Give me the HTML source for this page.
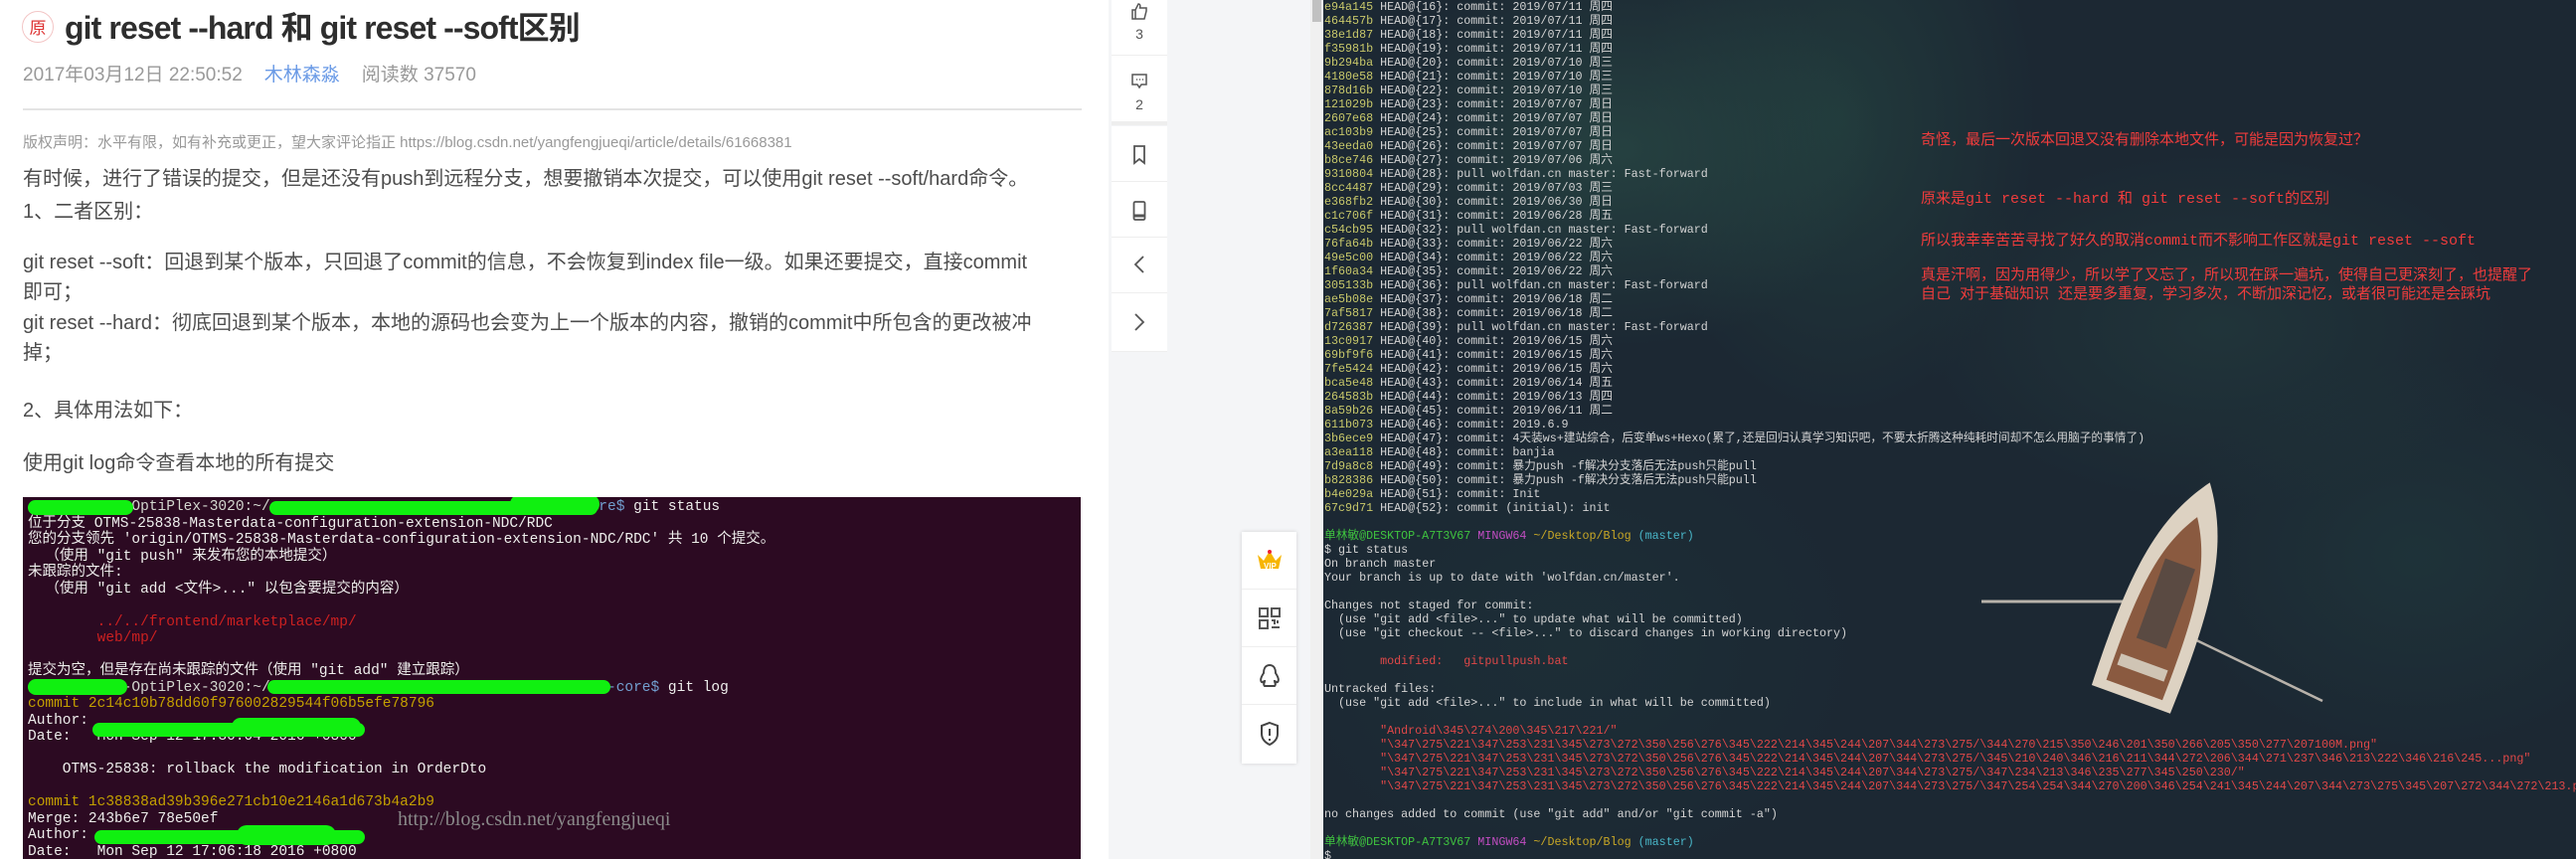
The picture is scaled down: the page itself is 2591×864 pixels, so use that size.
<!DOCTYPE html>
<html><head><meta charset="utf-8"><style>
*{margin:0;padding:0;box-sizing:border-box}
body{width:2591px;height:864px;overflow:hidden;background:#fff;position:relative;font-family:"Liberation Sans","Noto Sans CJK SC",sans-serif}
.a{position:absolute;white-space:nowrap}
.p{position:absolute;left:23px;font-size:20px;color:#4d4d4d;white-space:nowrap;line-height:24px}
#term{position:absolute;left:1331px;top:0;width:1260px;height:864px;overflow:hidden;
background:
radial-gradient(ellipse 260px 200px at 300px 150px,rgba(45,85,75,.55),transparent),
radial-gradient(ellipse 200px 300px at 520px 120px,rgba(40,80,70,.45),transparent),
radial-gradient(ellipse 300px 180px at 900px 330px,rgba(40,75,70,.35),transparent),
radial-gradient(ellipse 250px 200px at 1100px 560px,rgba(35,70,68,.35),transparent),
radial-gradient(ellipse 300px 250px at 250px 650px,rgba(30,55,60,.4),transparent),
#1c2833}
#term pre{position:absolute;left:1px;top:0;font-family:"Liberation Mono","Noto Sans CJK SC",monospace;font-size:11.7px;line-height:14px;color:#d4d4d4}
.h{color:#c8c86a}.g{color:#3fc43f}.m{color:#c24dc2}.y{color:#c9a826}.c{color:#49b6c8}.r{color:#e04848}
#img{position:absolute;left:23px;top:500px;width:1064px;height:364px;background:#2c0a22;overflow:hidden}
#img pre{position:absolute;left:5px;top:2px;font-family:"Liberation Mono","Noto Sans CJK SC",monospace;font-size:14.5px;line-height:16.5px;color:#eeeeec}
.gr{position:absolute;background:#10f010;border-radius:8px}
.note{position:absolute;left:1932px;color:#f03c3c;font-family:"Liberation Mono","Noto Sans CJK SC",monospace;font-size:15px;white-space:nowrap}
.sb{position:absolute;left:1118px;width:56px;background:#fff;border-bottom:1px solid #eee;text-align:center;color:#555}
.ft{position:absolute;left:1249px;width:55px;height:58px;background:#fff;border-bottom:1px solid #eee;display:flex;align-items:center;justify-content:center}
</style></head><body>
<div class="a" style="left:1115px;top:0;width:216px;height:864px;background:#f4f5f7"></div>
<div class="a" style="left:1318px;top:0;width:13px;height:864px;background:#f0f0f0"></div>
<div class="a" style="left:1320px;top:0;width:9px;height:22px;background:#c1c1c1"></div>

<div class="a" style="left:22px;top:11px;width:32px;height:32px;border:1px solid #f3c5c5;border-radius:50%;color:#d33;font-size:17px;line-height:30px;text-align:center;font-family:'Noto Sans CJK SC',sans-serif">原</div>
<div class="a" style="left:65px;top:8px;font-size:32px;font-weight:bold;color:#2e2e2e;letter-spacing:-0.9px;line-height:40px">git reset --hard 和 git reset --soft区别</div>
<div class="a" style="left:23px;top:64px;font-size:19px;color:#999;line-height:24px">2017年03月12日 22:50:52<span style="color:#6b9be6;margin-left:22px">木林森淼</span><span style="margin-left:22px">阅读数 37570</span></div>
<div class="a" style="left:23px;top:109px;width:1065px;height:2px;background:#e4e4e4"></div>
<div class="a" style="left:23px;top:134px;font-size:15px;color:#999;line-height:20px">版权声明：水平有限，如有补充或更正，望大家评论指正 https://blog.csdn.net/yangfengjueqi/article/details/61668381</div>
<div class="p" style="top:168px">有时候，进行了错误的提交，但是还没有push到远程分支，想要撤销本次提交，可以使用git reset --soft/hard命令。</div>
<div class="p" style="top:201px">1、二者区别：</div>
<div class="p" style="top:252px">git reset --soft：回退到某个版本，只回退了commit的信息，不会恢复到index file一级。如果还要提交，直接commit</div>
<div class="p" style="top:282px">即可；</div>
<div class="p" style="top:313px">git reset --hard：彻底回退到某个版本，本地的源码也会变为上一个版本的内容，撤销的commit中所包含的更改被冲</div>
<div class="p" style="top:343px">掉；</div>
<div class="p" style="top:401px">2、具体用法如下：</div>
<div class="p" style="top:454px">使用git log命令查看本地的所有提交</div>

<div id="img"><pre><span style="color:#d3d7cf">            OptiPlex-3020:~/                                  </span><span style="color:#729fcf">s-core$</span> git status
位于分支 OTMS-25838-Masterdata-configuration-extension-NDC/RDC
您的分支领先 'origin/OTMS-25838-Masterdata-configuration-extension-NDC/RDC' 共 10 个提交。
  （使用 "git push" 来发布您的本地提交）
未跟踪的文件:
  （使用 "git add &lt;文件&gt;..." 以包含要提交的内容）

<span style="color:#cc2020">        ../../frontend/marketplace/mp/
        web/mp/</span>

提交为空，但是存在尚未跟踪的文件（使用 "git add" 建立跟踪）
<span style="color:#d3d7cf">           -OptiPlex-3020:~/                                       </span><span style="color:#729fcf">-core$</span> git log
<span style="color:#c4a000">commit 2c14c10b78dd60f976002829544f06b5efe78796</span>
Author:
Date:   Mon Sep 12 17:30:04 2016 +0800

    OTMS-25838: rollback the modification in OrderDto

<span style="color:#c4a000">commit 1c38838ad39b396e271cb10e2146a1d673b4a2b9</span>
Merge: 243b6e7 78e50ef
Author:
Date:   Mon Sep 12 17:06:18 2016 +0800</pre>
<div class="gr" style="left:5px;top:3px;width:106px;height:15px"></div>
<div class="gr" style="left:248px;top:4px;width:330px;height:14px"></div>
<div class="gr" style="left:490px;top:-3px;width:90px;height:20px;border-radius:12px"></div>
<div class="gr" style="left:5px;top:183px;width:100px;height:16px"></div>
<div class="gr" style="left:246px;top:184px;width:345px;height:14px"></div>
<div class="gr" style="left:70px;top:227px;width:274px;height:14px"></div>
<div class="gr" style="left:210px;top:222px;width:130px;height:18px;border-radius:12px"></div>
<div class="gr" style="left:72px;top:335px;width:272px;height:14px"></div>
<div class="gr" style="left:215px;top:330px;width:100px;height:20px;border-radius:12px"></div>
<div class="a" style="left:377px;top:313px;font-family:'Liberation Serif',serif;font-size:20px;color:#8a8a8a">http://blog.csdn.net/yangfengjueqi</div>
</div>

<div class="sb" style="top:0;height:56px;padding-top:2px"><svg width="18" height="18" viewBox="0 0 18 18" fill="none" stroke="#555" stroke-width="1.5"><path d="M2 8h3v9H2zM5 8l3-6c2 0 2 2 1.5 4H16v3l-2 8H5"/></svg><div style="font-size:14px;line-height:18px;color:#555">3</div></div>
<div class="sb" style="top:56px;height:70px;padding-top:16px;border-bottom:4px solid #eee"><svg width="18" height="18" viewBox="0 0 18 18" fill="none" stroke="#555" stroke-width="1.5"><path d="M2 3h14v10h-5l-2 3-2-3H2z"/><path d="M6 8h1M9 8h1M12 8h1"/></svg><div style="font-size:14px;line-height:20px">2</div></div>
<div class="sb" style="top:127px;height:56px;padding-top:19px"><svg width="14" height="20" viewBox="0 0 14 20" fill="none" stroke="#555" stroke-width="1.8"><path d="M2 1h10v17l-5-4-5 4z"/></svg></div>
<div class="sb" style="top:183px;height:56px;padding-top:19px"><svg width="14" height="20" viewBox="0 0 14 20" fill="none" stroke="#555" stroke-width="1.8"><rect x="1.5" y="1" width="11" height="18" rx="1.5"/><path d="M2 15h10" stroke-width="3"/></svg></div>
<div class="sb" style="top:239px;height:56px;padding-top:17px"><svg width="14" height="20" viewBox="0 0 14 20" fill="none" stroke="#555" stroke-width="1.8"><path d="M11 2L3 10l8 8"/></svg></div>
<div class="sb" style="top:295px;height:59px;padding-top:19px"><svg width="14" height="20" viewBox="0 0 14 20" fill="none" stroke="#555" stroke-width="1.8"><path d="M3 2l8 8-8 8"/></svg></div>

<div class="a" style="left:1249px;top:535px;width:55px;height:233px;box-shadow:0 0 4px rgba(0,0,0,.15);background:#fff"></div>
<div class="ft" style="top:535px"><svg width="28" height="24" viewBox="0 0 28 24"><path d="M2 6l6 6 6-10 6 10 6-6-3 14H5z" fill="#f7b500"/><circle cx="14" cy="3" r="2" fill="#e23"/><text x="8" y="20" font-size="8" fill="#fff" font-family="Liberation Sans" font-weight="bold">VIP</text></svg></div>
<div class="ft" style="top:593px"><svg width="22" height="22" viewBox="0 0 22 22" fill="none" stroke="#555" stroke-width="2"><rect x="1" y="1" width="8" height="8"/><rect x="13" y="1" width="8" height="8"/><rect x="1" y="13" width="8" height="8"/><path d="M13 13h3v4M19 13v3M13 20h8"/></svg></div>
<div class="ft" style="top:651px"><svg width="22" height="26" viewBox="0 0 22 26" fill="none" stroke="#444" stroke-width="2"><path d="M11 2c-5 0-6 5-6 8-2 3-4 7-2 9 1 1 2-1 3-1 0 2-2 3 0 5h10c2-2 0-3 0-5 1 0 2 2 3 1 2-2 0-6-2-9 0-3-1-8-6-8z"/></svg></div>
<div class="ft" style="top:709px;border:0"><svg width="22" height="26" viewBox="0 0 22 26" fill="none" stroke="#444" stroke-width="2"><path d="M11 2l8 3v8c0 6-4 9-8 11-4-2-8-5-8-11V5z"/><path d="M11 8v7M11 18v2"/></svg></div>

<div id="term">
<svg class="a" style="left:650px;top:470px" width="380" height="270" viewBox="0 0 380 270">
<path d="M205 135L12 135" stroke="#b8b2aa" stroke-width="3"/>
<path d="M220 170L355 235" stroke="#b8b2aa" stroke-width="2.5"/>
<g transform="rotate(20 200 130)">
<path d="M200 8C238 60 246 120 242 240H158C154 120 162 60 200 8z" fill="#ddd2c2"/>
<path d="M200 45C226 85 232 130 230 230H170C168 130 174 85 200 45z" fill="#8a5a40"/>
<rect x="184" y="95" width="32" height="85" fill="#5a4a42"/>
<rect x="175" y="200" width="50" height="12" fill="#cfc4b4"/>
</g>
</svg>
<pre><span class="h">e94a145</span> HEAD@{16}: commit: 2019/07/11 周四
<span class="h">464457b</span> HEAD@{17}: commit: 2019/07/11 周四
<span class="h">38e1d87</span> HEAD@{18}: commit: 2019/07/11 周四
<span class="h">f35981b</span> HEAD@{19}: commit: 2019/07/11 周四
<span class="h">9b294ba</span> HEAD@{20}: commit: 2019/07/10 周三
<span class="h">4180e58</span> HEAD@{21}: commit: 2019/07/10 周三
<span class="h">878d16b</span> HEAD@{22}: commit: 2019/07/10 周三
<span class="h">121029b</span> HEAD@{23}: commit: 2019/07/07 周日
<span class="h">2607e68</span> HEAD@{24}: commit: 2019/07/07 周日
<span class="h">ac103b9</span> HEAD@{25}: commit: 2019/07/07 周日
<span class="h">43eeda0</span> HEAD@{26}: commit: 2019/07/07 周日
<span class="h">b8ce746</span> HEAD@{27}: commit: 2019/07/06 周六
<span class="h">9310804</span> HEAD@{28}: pull wolfdan.cn master: Fast-forward
<span class="h">8cc4487</span> HEAD@{29}: commit: 2019/07/03 周三
<span class="h">e368fb2</span> HEAD@{30}: commit: 2019/06/30 周日
<span class="h">c1c706f</span> HEAD@{31}: commit: 2019/06/28 周五
<span class="h">c54cb95</span> HEAD@{32}: pull wolfdan.cn master: Fast-forward
<span class="h">76fa64b</span> HEAD@{33}: commit: 2019/06/22 周六
<span class="h">49e5c00</span> HEAD@{34}: commit: 2019/06/22 周六
<span class="h">1f60a34</span> HEAD@{35}: commit: 2019/06/22 周六
<span class="h">305133b</span> HEAD@{36}: pull wolfdan.cn master: Fast-forward
<span class="h">ae5b08e</span> HEAD@{37}: commit: 2019/06/18 周二
<span class="h">7af5817</span> HEAD@{38}: commit: 2019/06/18 周二
<span class="h">d726387</span> HEAD@{39}: pull wolfdan.cn master: Fast-forward
<span class="h">13c0917</span> HEAD@{40}: commit: 2019/06/15 周六
<span class="h">69bf9f6</span> HEAD@{41}: commit: 2019/06/15 周六
<span class="h">7fe5424</span> HEAD@{42}: commit: 2019/06/15 周六
<span class="h">bca5e48</span> HEAD@{43}: commit: 2019/06/14 周五
<span class="h">264583b</span> HEAD@{44}: commit: 2019/06/13 周四
<span class="h">8a59b26</span> HEAD@{45}: commit: 2019/06/11 周二
<span class="h">611b073</span> HEAD@{46}: commit: 2019.6.9
<span class="h">3b6ece9</span> HEAD@{47}: commit: 4天装ws+建站综合，后变单ws+Hexo(累了,还是回归认真学习知识吧，不要太折腾这种纯耗时间却不怎么用脑子的事情了)
<span class="h">a3ea118</span> HEAD@{48}: commit: banjia
<span class="h">7d9a8c8</span> HEAD@{49}: commit: 暴力push -f解决分支落后无法push只能pull
<span class="h">b828386</span> HEAD@{50}: commit: 暴力push -f解决分支落后无法push只能pull
<span class="h">b4e029a</span> HEAD@{51}: commit: Init
<span class="h">67c9d71</span> HEAD@{52}: commit (initial): init

<span class="g">单林敏@DESKTOP-A7T3V67</span> <span class="m">MINGW64</span> <span class="y">~/Desktop/Blog</span> <span class="c">(master)</span>
$ git status
On branch master
Your branch is up to date with 'wolfdan.cn/master'.

Changes not staged for commit:
  (use "git add &lt;file&gt;..." to update what will be committed)
  (use "git checkout -- &lt;file&gt;..." to discard changes in working directory)

<span class="r">        modified:   gitpullpush.bat</span>

Untracked files:
  (use "git add &lt;file&gt;..." to include in what will be committed)

<span class="r">        "Android\345\274\200\345\217\221/"
        "\347\275\221\347\253\231\345\273\272\350\256\276\345\222\214\345\244\207\344\273\275/\344\270\215\350\246\201\350\266\205\350\277\207100M.png"
        "\347\275\221\347\253\231\345\273\272\350\256\276\345\222\214\345\244\207\344\273\275/\345\210\240\346\216\211\344\272\206\344\271\237\346\213\222\346\216\245...png"
        "\347\275\221\347\253\231\345\273\272\350\256\276\345\222\214\345\244\207\344\273\275/\347\234\213\346\235\277\345\250\230/"
        "\347\275\221\347\253\231\345\273\272\350\256\276\345\222\214\345\244\207\344\273\275/\347\254\254\344\270\200\346\254\241\345\244\207\344\273\275\345\207\272\344\272\213.png"</span>

no changes added to commit (use "git add" and/or "git commit -a")

<span class="g">单林敏@DESKTOP-A7T3V67</span> <span class="m">MINGW64</span> <span class="y">~/Desktop/Blog</span> <span class="c">(master)</span>
$ </pre>
</div>
<div class="note" style="top:129px">奇怪，最后一次版本回退又没有删除本地文件，可能是因为恢复过？</div>
<div class="note" style="top:188px">原来是git reset --hard 和 git reset --soft的区别</div>
<div class="note" style="top:230px">所以我幸幸苦苦寻找了好久的取消commit而不影响工作区就是git reset --soft</div>
<div class="note" style="top:268px;line-height:19px">真是汗啊，因为用得少，所以学了又忘了，所以现在踩一遍坑，使得自己更深刻了，也提醒了<br>自己  对于基础知识  还是要多重复，学习多次，不断加深记忆，或者很可能还是会踩坑</div>
</body></html>
